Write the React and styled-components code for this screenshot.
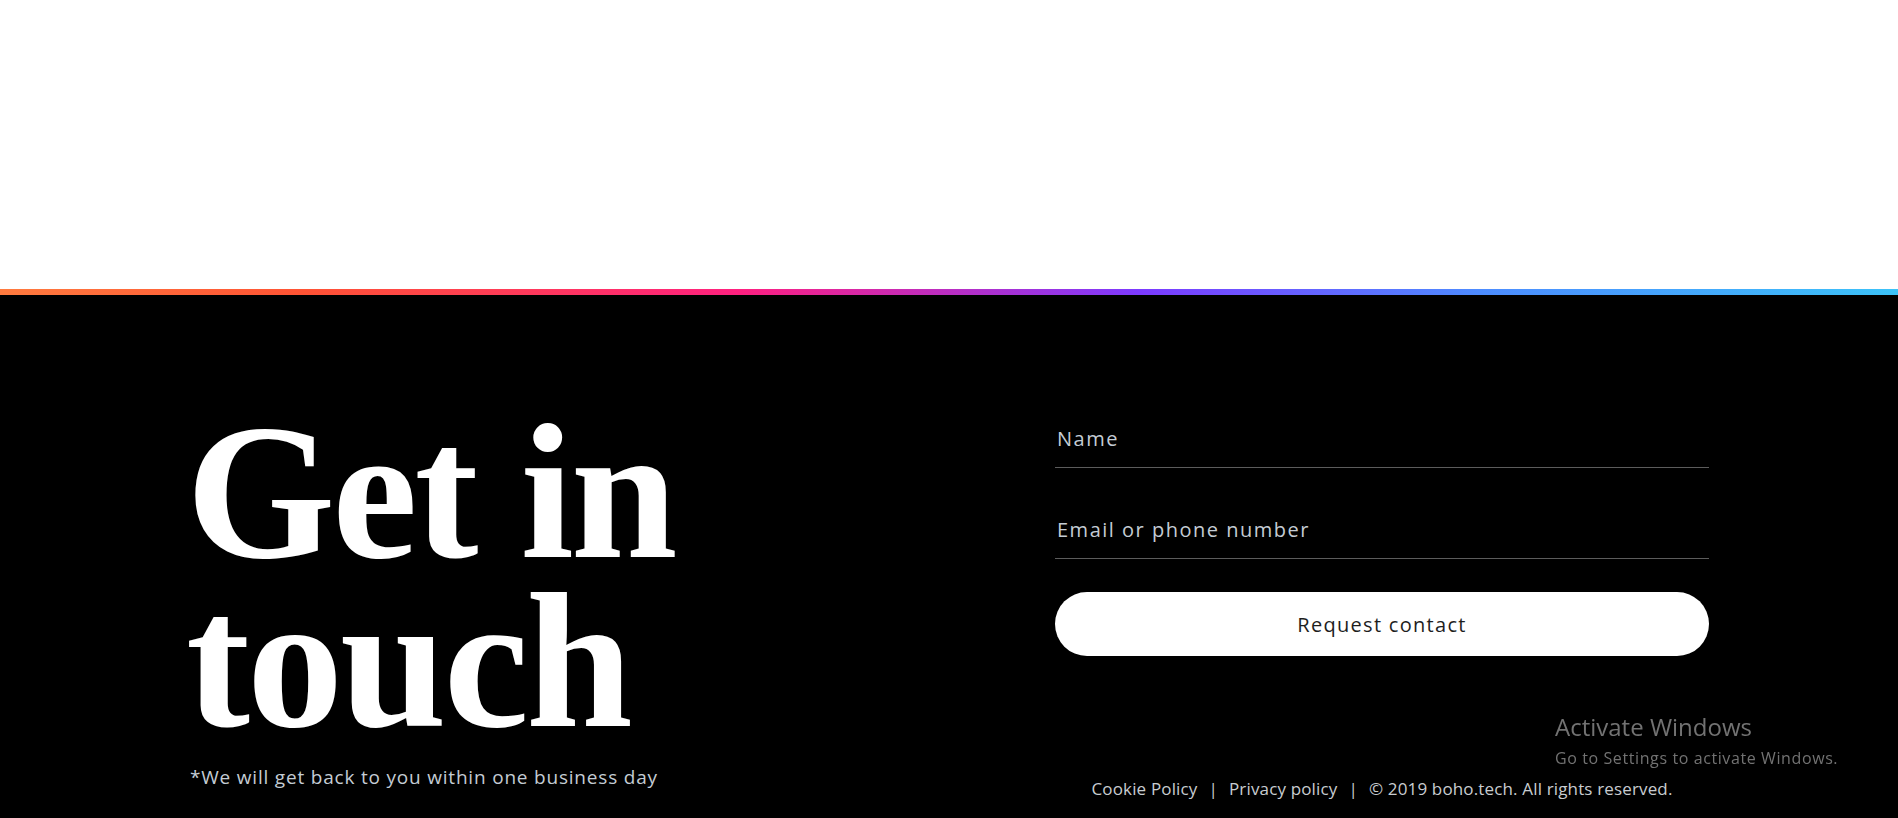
import styled, { createGlobalStyle } from "styled-components";

const GlobalStyle = createGlobalStyle`
  body {
    margin: 0;
    background: #fff;
    font-family: "Open Sans", "Liberation Sans", sans-serif;
  }
`;

const Hero = styled.div`
  height: 289px;
  background: #fff;
`;

const GradientBar = styled.div`
  height: 6px;
  background: linear-gradient(
    90deg,
    #ff7b3f 0%,
    #ff5334 16%,
    #ff2080 39%,
    #7c3aff 60%,
    #4d8cff 78%,
    #3cc3f8 100%
  );
`;

const ContactSection = styled.section`
  background: #000;
  padding: 113px 189px 40px 190px;
  display: flex;
  justify-content: space-between;
  align-items: flex-start;
`;

const Intro = styled.div`
  display: flex;
  flex-direction: column;
`;

const Heading = styled.h1`
  margin: 0 0 0 -4px;
  color: #fff;
  font-family: "Liberation Serif", "Times New Roman", serif;
  font-weight: 700;
  font-size: 192px;
  line-height: 169px;
  letter-spacing: -3px;
`;

const Note = styled.p`
  margin: 19px 0 0;
  color: #c4ccd4;
  font-size: 19px;
  line-height: 24px;
  letter-spacing: 0.8px;
`;

const FormColumn = styled.form`
  width: 654px;
  padding-top: 16px;
  display: flex;
  flex-direction: column;
`;

const Input = styled.input`
  display: block;
  width: 100%;
  box-sizing: border-box;
  height: 44px;
  margin: 0 0 ${(p) => p.$gap}px;
  padding: 0 0 15px 2px;
  border: none;
  border-bottom: 1px solid #5c5c5c;
  background: transparent;
  color: #fff;
  font-family: inherit;
  font-size: 20px;
  line-height: 28px;
  letter-spacing: 1.5px;
  outline: none;

  &::placeholder {
    color: #c4ccd4;
  }
`;

const SubmitButton = styled.button`
  height: 64px;
  width: 100%;
  border: none;
  border-radius: 32px;
  background: #fff;
  color: #1e1e1e;
  font-family: inherit;
  font-size: 20px;
  letter-spacing: 1.3px;
  cursor: pointer;
`;

const FooterLinks = styled.div`
  margin-top: 121px;
  display: flex;
  justify-content: center;
  gap: 11px;
  color: #c8ccd0;
  font-size: 17px;
  line-height: 24px;
  letter-spacing: 0.15px;
`;

const FooterLink = styled.a`
  color: inherit;
  text-decoration: none;
`;

const Watermark = styled.div`
  position: fixed;
  top: 711px;
  left: 1555px;
  color: #727272;
  pointer-events: none;
`;

const WatermarkTitle = styled.div`
  font-size: 24px;
  line-height: 32px;
`;

const WatermarkText = styled.div`
  font-size: 16px;
  line-height: 22px;
  margin-top: 4px;
  letter-spacing: 0.6px;
`;

export default function App() {
  return (
    <>
      <GlobalStyle />
      <Hero />
      <GradientBar />
      <ContactSection>
        <Intro>
          <Heading>
            Get in
            <br />
            touch
          </Heading>
          <Note>*We will get back to you within one business day</Note>
        </Intro>
        <FormColumn onSubmit={(e) => e.preventDefault()}>
          <Input $gap={47} placeholder="Name" />
          <Input $gap={33} placeholder="Email or phone number" />
          <SubmitButton type="submit">Request contact</SubmitButton>
          <FooterLinks>
            <FooterLink href="#">Cookie Policy</FooterLink>
            <span>|</span>
            <FooterLink href="#">Privacy policy</FooterLink>
            <span>|</span>
            <span>© 2019 boho.tech. All rights reserved.</span>
          </FooterLinks>
        </FormColumn>
      </ContactSection>
      <Watermark>
        <WatermarkTitle>Activate Windows</WatermarkTitle>
        <WatermarkText>Go to Settings to activate Windows.</WatermarkText>
      </Watermark>
    </>
  );
}
